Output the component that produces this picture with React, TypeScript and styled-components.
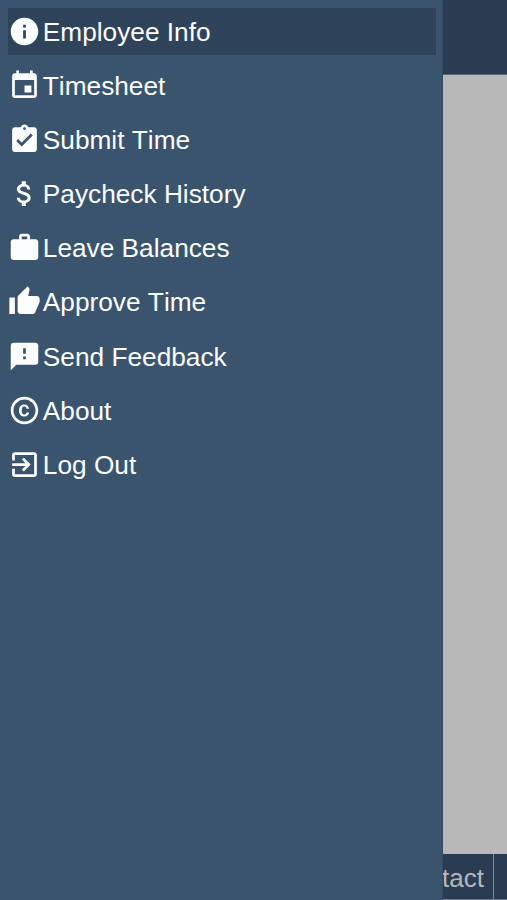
import React from "react";
import styled, { createGlobalStyle } from "styled-components";
import type { IconType } from "react-icons";
import {
  MdInfo,
  MdEvent,
  MdAssignmentTurnedIn,
  MdAttachMoney,
  MdWork,
  MdThumbUp,
  MdFeedback,
  MdCopyright,
  MdExitToApp,
} from "react-icons/md";

const GlobalStyle = createGlobalStyle`
  * { box-sizing: border-box; }
  body {
    margin: 0;
    font-family: "Liberation Sans", Arial, sans-serif;
    font-kerning: none;
    overflow: hidden;
  }
`;

const Screen = styled.div`
  position: relative;
  display: flex;
  flex-direction: column;
  width: 100%;
  height: 100vh;
  overflow: hidden;
  background: #b9b9b9;
`;

const Header = styled.header`
  height: 75px;
  flex: none;
  background: #2a3c51;
  border-bottom: 1px solid #5d6875;
`;

const Content = styled.main`
  flex: 1;
`;

const Footer = styled.footer`
  display: flex;
  justify-content: flex-end;
  height: 46px;
  flex: none;
  background: #2a3c51;
  border-bottom: 1px solid #707b87;
`;

const FooterTab = styled.div`
  display: flex;
  align-items: center;
  padding: 3px 9px 0;
  font-size: 26px;
  line-height: 30px;
  color: #b5b8bb;
  border-right: 1px solid #7f8993;
`;

const FooterEdge = styled.div`
  width: 13px;
`;

const Drawer = styled.nav`
  position: absolute;
  top: 0;
  bottom: 0;
  left: 0;
  width: 443px;
  padding: 7.5px 6px 0 7.5px;
  background: #3a546e;
  border-right: 1px solid #344b63;
`;

const Menu = styled.ul`
  display: flex;
  flex-direction: column;
  gap: 6.65px;
  margin: 0;
  padding: 0;
  list-style: none;
`;

const MenuItem = styled.li<{ $active?: boolean }>`
  display: flex;
  align-items: center;
  height: 47.5px;
  color: #fbfdff;
  background: ${({ $active }) => ($active ? "#2f445a" : "transparent")};

  svg {
    flex: none;
    width: 33px;
    height: 33px;
    margin: 0 0 0 0.5px;
  }
`;

const Label = styled.span`
  margin-left: 1.8px;
  padding-top: 1px;
  font-size: 26.25px;
  line-height: 30px;
  white-space: nowrap;
`;

const items: { label: string; Icon: IconType; active?: boolean }[] = [
  { label: "Employee Info", Icon: MdInfo, active: true },
  { label: "Timesheet", Icon: MdEvent },
  { label: "Submit Time", Icon: MdAssignmentTurnedIn },
  { label: "Paycheck History", Icon: MdAttachMoney },
  { label: "Leave Balances", Icon: MdWork },
  { label: "Approve Time", Icon: MdThumbUp },
  { label: "Send Feedback", Icon: MdFeedback },
  { label: "About", Icon: MdCopyright },
  { label: "Log Out", Icon: MdExitToApp },
];

export default function App() {
  return (
    <>
      <GlobalStyle />
      <Screen>
        <Header />
        <Content />
        <Footer>
          <FooterTab>Contact</FooterTab>
          <FooterEdge />
        </Footer>
        <Drawer>
          <Menu>
            {items.map(({ label, Icon, active }) => (
              <MenuItem key={label} $active={active}>
                <Icon />
                <Label>{label}</Label>
              </MenuItem>
            ))}
          </Menu>
        </Drawer>
      </Screen>
    </>
  );
}
